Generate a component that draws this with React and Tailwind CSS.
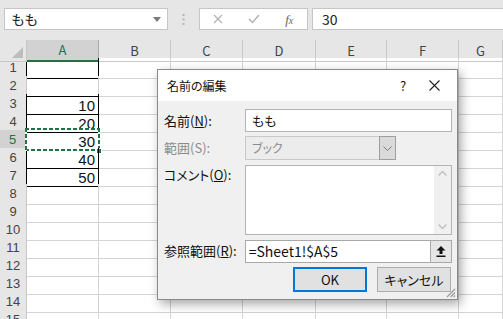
import React from 'react';

const FONT = { fontFamily: '"Noto Sans CJK JP", "Noto Sans", sans-serif' };
const NUM_FONT = { fontFamily: '"Liberation Sans", Arial, sans-serif' };
const COLS = ['A', 'B', 'C', 'D', 'E', 'F', 'G'];
const VALUES = { 3: 10, 4: 20, 5: 30, 6: 40, 7: 50 };
const BOXED = [1, 3, 4, 5, 6, 7];
const ROWS = Array.from({ length: 15 }, (_, i) => i + 1);

const grid = 'grid grid-cols-[27px_72px_72px_72px_73px_71px_72px_1fr]';

const FormulaBar = () => (
  <div className="h-[40px] bg-[#e6e6e6] flex items-start pt-[8px] pl-[4px] gap-0">
    <div className="w-[164px] h-[22px] bg-white border border-[#c6c6c6] flex items-center pl-[6px] pr-[6px]">
      <span className="flex-1 text-[14px] text-[#222] [font-feature-settings:'palt']">もも</span>
      <svg width="8" height="5" viewBox="0 0 8 5"><path d="M0 0h8L4 5z" fill="#7a7a7a" /></svg>
    </div>
    <div className="w-[31px] h-[22px] flex items-center justify-center">
      <svg width="3" height="11" viewBox="0 0 3 11">
        <rect x="0.5" y="0" width="2" height="2" fill="#b4b4b4" />
        <rect x="0.5" y="4.5" width="2" height="2" fill="#b4b4b4" />
        <rect x="0.5" y="9" width="2" height="2" fill="#b4b4b4" />
      </svg>
    </div>
    <div className="w-[109px] h-[22px] bg-white border border-[#c6c6c6] flex items-center">
      <div className="w-[36px] flex justify-center">
        <svg width="10" height="10" viewBox="0 0 10 10"><path d="M1 1l8 8M9 1l-8 8" stroke="#b3b3b3" strokeWidth="1.3" /></svg>
      </div>
      <div className="w-[36px] flex justify-center">
        <svg width="12" height="10" viewBox="0 0 12 10"><path d="M1 5l3.5 3.5L11 1" stroke="#b3b3b3" strokeWidth="1.5" fill="none" /></svg>
      </div>
      <div className="w-[36px] flex justify-center">
        <span className="italic text-[13px] text-[#666] leading-none" style={{ fontFamily: '"Liberation Serif", serif' }}>
          f<span className="text-[10px]">x</span>
        </span>
      </div>
    </div>
    <div className="flex-1 ml-[4px] h-[22px] bg-white border border-[#c6c6c6] border-r-0 flex items-center pl-[9px]">
      <span className="text-[14px] text-[#222]">30</span>
    </div>
  </div>
);

const HeaderRow = () => (
  <div className={`${grid} h-[18px] bg-[#e6e6e6]`}>
    <div className="relative border-r border-b border-[#c8c8c8]">
      <svg className="absolute right-[3px] bottom-[3px]" width="11" height="11" viewBox="0 0 11 11">
        <path d="M11 0v11H0z" fill="#bdbdbd" />
      </svg>
    </div>
    {COLS.map((c) => (
      <div
        key={c}
        className={
          c === 'A'
            ? 'bg-[#d2d2d2] border-b-2 border-b-[#217346] border-r border-r-[#ababab] flex items-center justify-center text-[13px] text-[#217346]'
            : 'border-b border-b-[#c8c8c8] border-r border-r-[#c8c8c8] flex items-center justify-center text-[13px] text-[#444]'
        }
      >
        {c}
      </div>
    ))}
  </div>
);

// marching-ants frame drawn as four striped edges
const ants = 'bg-[repeating-linear-gradient(90deg,#217346_0_4px,#ffffff_4px_6px)]';
const antsV = 'bg-[repeating-linear-gradient(180deg,#217346_0_4px,#ffffff_4px_6px)]';

const Row = ({ r }) => {
  const boxed = BOXED.includes(r);
  const nextBoxed = BOXED.includes(r + 1);
  const selected = r === 5;
  return (
    <div className={`${grid} h-[18px] shrink-0`}>
      <div
        className={
          selected
            ? 'bg-[#d2d2d2] border-b border-b-[#c8c8c8] border-r-2 border-r-[#217346] flex items-center justify-center text-[13px] text-[#217346]'
            : `bg-[#e6e6e6] border-b border-b-[#c8c8c8] border-r ${boxed ? 'border-r-black' : 'border-r-[#c8c8c8]'} flex items-center justify-center text-[13px] text-[#444]`
        }
        style={NUM_FONT}
      >
        {r}
      </div>
      <div
        className={`relative border-r border-b ${boxed ? 'border-r-black' : 'border-r-[#d4d4d4]'} ${
          boxed || nextBoxed ? 'border-b-black' : 'border-b-[#d4d4d4]'
        } flex items-end justify-end pr-[3px] text-[15px] text-[#111] leading-[16px]`}
        style={NUM_FONT}
      >
        {VALUES[r]}
        {selected && (
          <>
            <div className={`absolute left-[-2px] right-[-2px] top-[-2px] h-[2px] ${ants}`} />
            <div className={`absolute left-[-2px] right-[-2px] bottom-[-1px] h-[2px] ${ants}`} />
            <div className={`absolute left-[-2px] top-[-2px] bottom-[-1px] w-[2px] ${antsV}`} />
            <div className={`absolute right-[-2px] top-[-2px] bottom-[-1px] w-[2px] ${antsV}`} />
            <div className="absolute right-[-4px] bottom-[-4px] w-[6px] h-[6px] bg-[#217346] border border-white" />
          </>
        )}
      </div>
      {COLS.slice(1).map((c) => (
        <div key={c} className="border-r border-b border-[#d4d4d4]" />
      ))}
    </div>
  );
};

const Label = ({ children, disabled }) => (
  <div className={`w-[81px] text-[13px] [font-feature-settings:'palt'] ${disabled ? 'text-[#8c8c8c]' : 'text-[#111]'}`}>
    {children}
  </div>
);

const Dialog = () => (
  <div
    className="absolute left-[157px] top-[69px] w-[301px] h-[231px] border border-[#8a8a8a] bg-[#f0f0f0] shadow-[3px_4px_10px_rgba(0,0,0,0.35)] flex flex-col [font-feature-settings:'palt']"
    style={FONT}
  >
    <div className="h-[31px] bg-white flex items-center pl-[9px] shrink-0">
      <span className="flex-1 text-[12px] text-[#111]">名前の編集</span>
      <span className="w-[20px] text-[13px] text-[#111] text-center">?</span>
      <div className="w-[44px] flex justify-center pr-[2px]">
        <svg width="11" height="11" viewBox="0 0 11 11"><path d="M0.5 0.5l10 10M10.5 0.5l-10 10" stroke="#222" strokeWidth="1.1" /></svg>
      </div>
    </div>
    <div className="flex-1 flex flex-col pl-[6px] pr-[5px] pt-[8px] gap-[4px]">
      <div className="flex items-center h-[23px]">
        <Label>
          名前(<span className="underline">N</span>):
        </Label>
        <div className="w-[208px] h-[23px] bg-white border border-[#b4b4b4] flex items-center pl-[6px] text-[13px] text-[#111]">
          もも
        </div>
      </div>
      <div className="flex items-center h-[24px]">
        <Label disabled>範囲(S):</Label>
        <div className="w-[151px] h-[24px] bg-[#ececec] border border-[#c9c9c9] flex items-center">
          <span className="flex-1 pl-[6px] text-[12px] text-[#8a8a8a]">ブック</span>
          <div className="w-[17px] h-[24px] -my-px -mr-px bg-[#dadada] border border-[#9e9e9e] flex items-center justify-center">
            <svg width="9" height="5" viewBox="0 0 9 5"><path d="M0.5 0.5l4 4 4-4" stroke="#7a7a7a" fill="none" /></svg>
          </div>
        </div>
      </div>
      <div className="flex items-start h-[70px] mt-[1px]">
        <Label>
          コメント(<span className="underline">O</span>):
        </Label>
        <div className="w-[208px] h-[70px] bg-white border border-[#b4b4b4] flex justify-end">
          <div className="w-[17px] h-full bg-[#f0f0f0] flex flex-col justify-between items-center py-[5px]">
            <svg width="9" height="5" viewBox="0 0 9 5"><path d="M0.5 4.5l4-4 4 4" stroke="#c2c2c2" fill="none" strokeWidth="1.5" /></svg>
            <svg width="9" height="5" viewBox="0 0 9 5"><path d="M0.5 0.5l4 4 4-4" stroke="#c2c2c2" fill="none" strokeWidth="1.5" /></svg>
          </div>
        </div>
      </div>
      <div className="flex items-center h-[22px] mt-[1px]">
        <Label>
          参照範囲(<span className="underline">R</span>):
        </Label>
        <div className="w-[208px] h-[23px] bg-white border border-[#a9a9a9] flex items-center">
          <span className="flex-1 pl-[3px] text-[14px] text-[#111]">=Sheet1!$A$5</span>
          <div className="w-[22px] h-[23px] -my-px -mr-px bg-[#e6e6e6] border border-[#a9a9a9] flex items-center justify-center">
            <svg width="10" height="11" viewBox="0 0 10 11">
              <path d="M5 0L9.5 4.5H6.5V8h-3V4.5H0.5z" fill="#111" />
              <rect x="0.5" y="9.5" width="9" height="1.5" fill="#111" />
            </svg>
          </div>
        </div>
      </div>
      <div className="flex justify-end gap-[10px] mt-[1px] pr-[1px]">
        <button className="w-[74px] h-[25px] bg-[#e1e1e1] border-2 border-[#0078d7] text-[13px] text-[#111]">OK</button>
        <button className="w-[74px] h-[25px] bg-[#e1e1e1] border border-[#adadad] text-[13px] text-[#111]">キャンセル</button>
      </div>
    </div>
    <svg className="absolute right-[1px] bottom-[1px]" width="11" height="11" viewBox="0 0 11 11">
      <path d="M10 2L2 10M10 5.5L5.5 10M10 8.5L8.5 10" stroke="#9a9a9a" strokeWidth="1.2" />
    </svg>
  </div>
);

export default function App() {
  return (
    <div className="relative w-[503px] h-[319px] overflow-hidden bg-white" style={FONT}>
      <FormulaBar />
      <HeaderRow />
      {ROWS.map((r) => (
        <Row key={r} r={r} />
      ))}
      <Dialog />
    </div>
  );
}
